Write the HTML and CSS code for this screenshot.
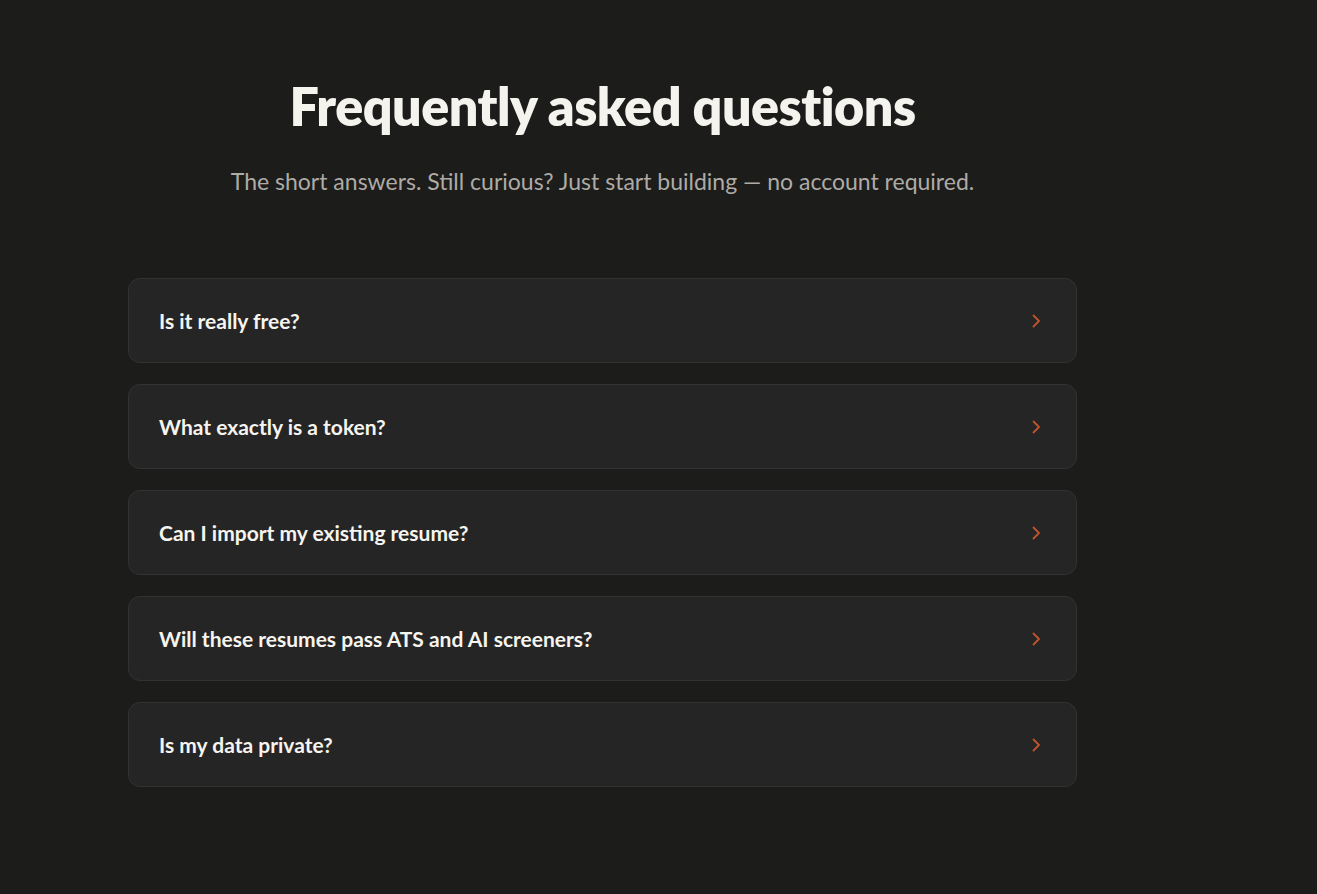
FILE: index.html
```html
<!DOCTYPE html>
<html lang="en">
<head>
<meta charset="utf-8">
<title>FAQ</title>
<link rel="stylesheet" href="styles.css">
</head>
<body>
<section class="faq">
  <h1 class="faq-title">Frequently asked questions</h1>
  <p class="faq-sub">The short answers. Still curious? Just start building — no account required.</p>
  <div class="faq-list">
    <div class="faq-item"><span class="faq-q">Is it really free?</span><svg class="chev" width="12" height="16" viewBox="0 0 12 16"><path d="M3.5 2.5 L9 8 L3.5 13.5" fill="none" stroke="#bf532d" stroke-width="1.8" stroke-linecap="round" stroke-linejoin="round"/></svg></div>
    <div class="faq-item"><span class="faq-q">What exactly is a token?</span><svg class="chev" width="12" height="16" viewBox="0 0 12 16"><path d="M3.5 2.5 L9 8 L3.5 13.5" fill="none" stroke="#bf532d" stroke-width="1.8" stroke-linecap="round" stroke-linejoin="round"/></svg></div>
    <div class="faq-item"><span class="faq-q">Can I import my existing resume?</span><svg class="chev" width="12" height="16" viewBox="0 0 12 16"><path d="M3.5 2.5 L9 8 L3.5 13.5" fill="none" stroke="#bf532d" stroke-width="1.8" stroke-linecap="round" stroke-linejoin="round"/></svg></div>
    <div class="faq-item"><span class="faq-q">Will these resumes pass ATS and AI screeners?</span><svg class="chev" width="12" height="16" viewBox="0 0 12 16"><path d="M3.5 2.5 L9 8 L3.5 13.5" fill="none" stroke="#bf532d" stroke-width="1.8" stroke-linecap="round" stroke-linejoin="round"/></svg></div>
    <div class="faq-item"><span class="faq-q">Is my data private?</span><svg class="chev" width="12" height="16" viewBox="0 0 12 16"><path d="M3.5 2.5 L9 8 L3.5 13.5" fill="none" stroke="#bf532d" stroke-width="1.8" stroke-linecap="round" stroke-linejoin="round"/></svg></div>
  </div>
</section>
</body>
</html>
```
FILE: styles.css
```css
html, body {
  margin: 0;
  padding: 0;
  background: #1c1c1b;
  height: 100%;
}
body {
  font-family: "Lato", "Noto Sans", sans-serif;
  color: #f4f2ed;
}
.faq {
  width: 949px;
  margin-left: 128px;
  padding-top: 76px;
}
.faq-title {
  margin: 0;
  text-align: center;
  font-size: 52px;
  font-weight: 800;
  line-height: 60px;
  letter-spacing: -0.5px;
  color: #f5f3ee;
}
.faq-sub {
  margin: 30px 0 0;
  text-align: center;
  font-size: 23px;
  line-height: 30px;
  color: #aeaba6;
}
.faq-list {
  margin-top: 82px;
  display: flex;
  flex-direction: column;
  gap: 21px;
}
.faq-item {
  height: 85px;
  box-sizing: border-box;
  border: 1px solid #323232;
  border-radius: 12px;
  background: #252525;
  display: flex;
  align-items: center;
  justify-content: space-between;
  padding: 0 34px 0 30px;
}
.faq-q {
  font-size: 21px;
  font-weight: 700;
  color: #f6f4ef;
}
.chev {
  display: block;
}
```
